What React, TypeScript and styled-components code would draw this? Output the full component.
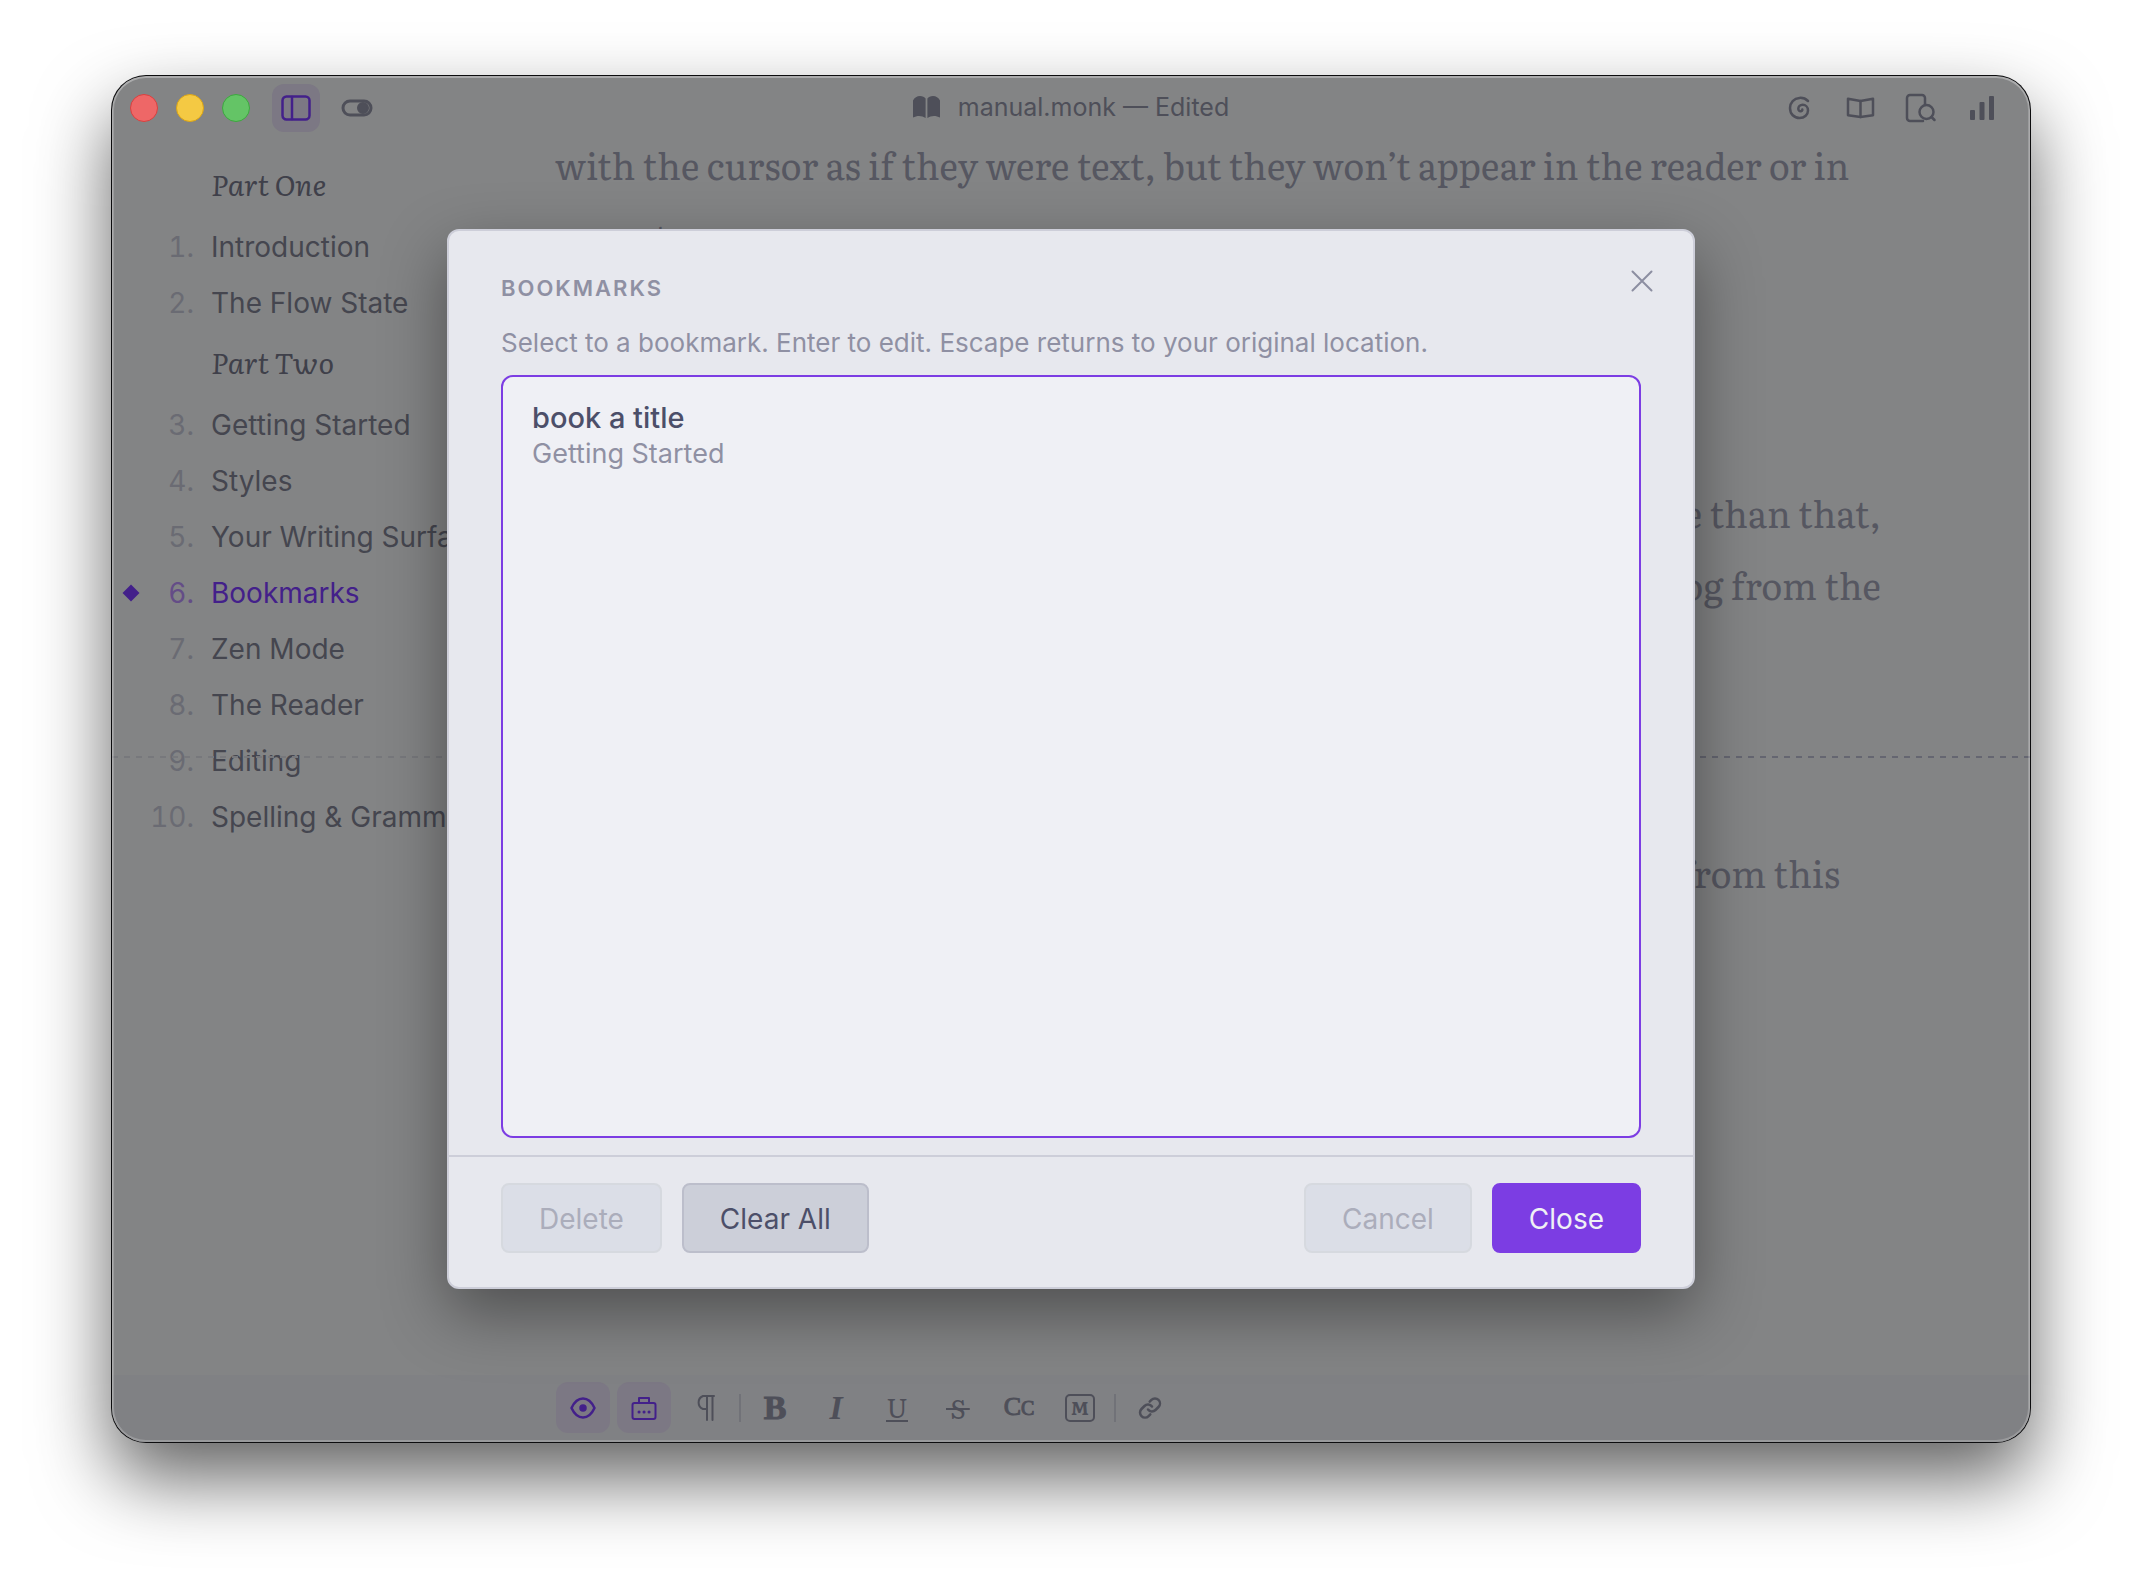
import React from 'react';
import styled, { createGlobalStyle, css } from 'styled-components';

const sans = `Inter, "Liberation Sans", sans-serif`;
const serif = `Literata, "Liberation Serif", serif`;

const GlobalStyle = createGlobalStyle`
  *, *::before, *::after { box-sizing: border-box; }
  body { margin: 0; background: #fff; font-family: ${sans}; }
  button { font: inherit; cursor: pointer; }
`;

const Desktop = styled.div`
  display: grid;
  grid-template-columns: minmax(0, 1fr);
  min-height: 100vh;
  padding: 76px 112px 148px;
  overflow: hidden;
`;

const Window = styled.div`
  position: relative;
  display: grid;
  grid-template-columns: minmax(0, 1fr);
  grid-template-rows: 64px 1fr 67px;
  overflow: hidden;
  border-radius: 34px;
  background: #838485;
  box-shadow: 0 0 0 1px #0c0c0e, 0 36px 76px rgba(0, 0, 0, 0.62);

  &::after {
    content: '';
    position: absolute;
    inset: 0;
    border-radius: inherit;
    box-shadow: inset 0 0 0 2px rgba(255, 255, 255, 0.2), inset 0 1px 0 1px rgba(255, 255, 255, 0.16);
    pointer-events: none;
  }
`;

const TitleBar = styled.header`
  display: grid;
  grid-template-columns: 1fr auto 1fr;
  align-items: center;
  padding: 0 18px;
  color: #4e4f59;
`;

const BarGroup = styled.div<{ $end?: boolean }>`
  display: flex;
  align-items: center;
  gap: 13px;
  justify-content: ${(p) => (p.$end ? 'flex-end' : 'flex-start')};
  padding-right: ${(p) => (p.$end ? 6 : 0)}px;
`;

const Lights = styled.div`
  display: flex;
  gap: 18px;
  margin-right: 9px;
`;

const Light = styled.button<{ $fill: string; $edge: string }>`
  width: 28px;
  height: 28px;
  padding: 0;
  border: 1px solid ${(p) => p.$edge};
  border-radius: 50%;
  background: ${(p) => p.$fill};
`;

const activeTool = css`
  background: #7c7884;
  color: #43208a;
`;

const BarButton = styled.button<{ $active?: boolean }>`
  display: grid;
  place-items: center;
  width: 48px;
  height: 48px;
  padding: 0;
  border: 0;
  border-radius: 12px;
  background: transparent;
  color: #4e4f59;
  ${(p) => p.$active && activeTool}
`;

const DocTitle = styled.h1`
  display: flex;
  align-items: center;
  gap: 18px;
  margin: 0;
  padding-bottom: 2px;
  color: #4e4f59;
  font: 400 25px/32px ${sans};
  white-space: nowrap;
`;

const Body = styled.div`
  position: relative;
  display: grid;
  grid-template-columns: 388px minmax(0, 1fr);
  min-height: 0;
`;

const Sidebar = styled.nav`
  padding-top: 13px;
  white-space: nowrap;
`;

const PartTitle = styled.h2`
  margin: 0;
  padding: 0 0 4px 99px;
  color: #3f404a;
  font: italic 400 29px/62px ${serif};
`;

const Chapters = styled.ol`
  margin: 0;
  padding: 0;
  list-style: none;
`;

const ChapterLink = styled.a<{ $active?: boolean }>`
  display: grid;
  grid-template-columns: 18px 54px 1fr;
  align-items: center;
  height: 56px;
  padding-left: 10px;
  color: ${(p) => (p.$active ? '#43208a' : '#45464f')};
  font-size: 28px;
  line-height: 56px;
  text-decoration: none;
`;

const Diamond = styled.svg`
  width: 18px;
  height: 18px;
  fill: currentColor;
`;

const Num = styled.span<{ $active?: boolean }>`
  justify-self: end;
  color: ${(p) => (p.$active ? '#644d87' : '#6a6b73')};
  font-variant-numeric: tabular-nums;
`;

const Label = styled.span`
  padding-left: 17px;
`;

const Editor = styled.main`
  margin-top: -11px;
  padding: 0 149px 0 55px;
  color: #565761;
  font: 400 36px/72px ${serif};
  white-space: nowrap;
`;

const Passage = styled.p<{ $gap?: number; $inset?: number }>`
  margin: ${(p) => p.$gap ?? 0}px 0 0;
  padding-right: ${(p) => p.$inset ?? 0}px;
`;

const TailPassage = styled(Passage)`
  text-align: right;
`;

const FocusLine = styled.div`
  position: absolute;
  inset: 616px 0 auto;
  display: grid;
  grid-template-columns: 388px 1fr;
  height: 2px;
  pointer-events: none;
`;

const Dashes = styled.span<{ $color: string }>`
  background: repeating-linear-gradient(90deg, ${(p) => p.$color} 0 6px, transparent 6px 12px);
`;

const FormatBar = styled.footer`
  display: flex;
  align-items: center;
  gap: 7px;
  padding: 0 0 2px 444px;
  background: #808184;
`;

const FormatButton = styled.button<{ $active?: boolean }>`
  display: grid;
  place-items: center;
  width: 54px;
  height: 51px;
  padding: 0;
  border: 0;
  border-radius: 12px;
  background: transparent;
  color: #4e4f59;
  ${(p) => p.$active && activeTool}
`;

const glyphKinds = {
  bold: css`
    font-family: "Liberation Serif", serif;
    font-weight: 700;
    font-size: 34px;
    -webkit-text-stroke: 1px;
  `,
  italic: css`
    font-family: "Liberation Serif", serif;
    font-weight: 700;
    font-style: italic;
    font-size: 34px;
  `,
  underline: css`
    font-size: 26px;
    line-height: 26px;
    border-bottom: 2px solid;
  `,
  strike: css`
    padding: 0 4px;
    font-size: 26px;
    background: linear-gradient(currentColor, currentColor) center 16px / 100% 2px no-repeat;
  `,
};

const Glyph = styled.span<{ $kind: keyof typeof glyphKinds }>`
  font: 400 30px/32px ${serif};
  ${(p) => glyphKinds[p.$kind]}
`;

const CapsGlyph = styled.span`
  font: 400 26px/32px "Liberation Serif", serif;
  -webkit-text-stroke: 1px;
  small { font-size: 20px; }
`;

const BoxGlyph = styled.span`
  display: grid;
  place-items: center;
  width: 30px;
  height: 28px;
  border: 2px solid;
  border-radius: 5px;
  font: 700 18px/24px ${serif};
`;

const Separator = styled.span`
  width: 2px;
  height: 28px;
  background: #717278;
`;

const Backdrop = styled.div`
  position: absolute;
  inset: 0;
  display: grid;
  place-items: center;
`;

const Dialog = styled.section`
  display: flex;
  flex-direction: column;
  width: 1248px;
  max-width: 90%;
  border: 2px solid #cdced9;
  border-radius: 12px;
  background: #e7e8ee;
  box-shadow: 0 24px 64px rgba(0, 0, 0, 0.4);
`;

const DialogHead = styled.div`
  display: flex;
  align-items: center;
  justify-content: space-between;
  padding: 26px 27px 0 52px;
`;

const DialogTitle = styled.h2`
  margin: 0;
  padding-top: 14px;
  color: #8f90a3;
  font: 600 22px/28px ${sans};
  letter-spacing: 2px;
  text-transform: uppercase;
`;

const CloseIcon = styled.button`
  display: grid;
  place-items: center;
  width: 48px;
  height: 48px;
  padding: 0;
  border: 0;
  background: transparent;
  color: #8c8ea1;
`;

const Hint = styled.p`
  margin: 0;
  padding: 20px 52px 15px;
  color: #8f90a3;
  font-size: 26px;
  line-height: 35px;
`;

const List = styled.ul`
  height: 763px;
  margin: 0 52px 17px;
  padding: 23px 29px;
  border: 2px solid #7c3de3;
  border-radius: 12px;
  background: #eff0f5;
  list-style: none;
`;

const Bookmark = styled.button`
  display: grid;
  padding: 0;
  border: 0;
  background: transparent;
  text-align: left;
`;

const BookmarkName = styled.span`
  color: #4c4f69;
  font-size: 29px;
  font-weight: 500;
  line-height: 36px;
`;

const BookmarkPlace = styled.span`
  color: #8f90a3;
  font-size: 27px;
  line-height: 36px;
`;

const Actions = styled.div`
  display: flex;
  gap: 20px;
  padding: 26px 52px 34px;
  border-top: 2px solid #cdced9;
`;

const ActionButton = styled.button<{ $primary?: boolean }>`
  height: 70px;
  padding: 2px ${(p) => (p.$primary ? 35 : 36)}px 0;
  border: 2px solid ${(p) => (p.$primary ? '#7c3de3' : '#bcbecb')};
  border-radius: 8px;
  background: ${(p) => (p.$primary ? '#7c3de3' : '#cccfd9')};
  color: ${(p) => (p.$primary ? '#eff1f5' : '#4c4f69')};
  font-size: 28px;

  &:disabled {
    border-color: #d6d9df;
    background: #dbdee7;
    color: #abadbb;
  }
`;

const Spacer = styled.span`
  flex: 1;
`;

type IconProps = { w: number; h: number; sw?: number; children: React.ReactNode };
const Icon = ({ w, h, sw = 3, children }: IconProps) => (
  <svg
    width={w}
    height={h}
    viewBox={`0 0 ${w} ${h}`}
    fill="none"
    stroke="currentColor"
    strokeWidth={sw}
    strokeLinecap="round"
    strokeLinejoin="round"
    aria-hidden="true"
  >
    {children}
  </svg>
);

const partOne = ['Introduction', 'The Flow State'];
const partTwo = [
  'Getting Started',
  'Styles',
  'Your Writing Surface',
  'Bookmarks',
  'Zen Mode',
  'The Reader',
  'Editing',
  'Spelling & Grammar',
];

const ChapterList = ({ names, start, current }: { names: string[]; start: number; current?: string }) => (
  <Chapters start={start}>
    {names.map((name, i) => {
      const active = name === current;
      return (
        <li key={name}>
          <ChapterLink href="#" $active={active} aria-current={active ? 'page' : undefined}>
            {active ? (
              <Diamond viewBox="0 0 18 18" aria-hidden="true">
                <path d="M9 .5 17.5 9 9 17.5 .5 9z" />
              </Diamond>
            ) : (
              <span />
            )}
            <Num $active={active}>{start + i}.</Num>
            <Label>{name}</Label>
          </ChapterLink>
        </li>
      );
    })}
  </Chapters>
);

export default function App() {
  return (
    <>
      <GlobalStyle />
      <Desktop>
        <Window>
          <TitleBar>
            <BarGroup>
              <Lights>
                <Light aria-label="Close window" $fill="#ee6767" $edge="#d9403f" />
                <Light aria-label="Minimize window" $fill="#f4c943" $edge="#dba514" />
                <Light aria-label="Zoom window" $fill="#64c466" $edge="#3da73f" />
              </Lights>
              <BarButton $active aria-label="Toggle sidebar">
                <Icon w={30} h={26} sw={2.5}>
                  <rect x="1.500" y="1.500" width="27" height="23" rx="4" />
                  <path d="M11 2v22" />
                </Icon>
              </BarButton>
              <BarButton aria-label="Focus mode">
                <Icon w={32} h={18}>
                  <rect x="2" y="2" width="28" height="14" rx="7" />
                  <circle cx="22" cy="9" r="5" fill="currentColor" strokeWidth="2" />
                </Icon>
              </BarButton>
            </BarGroup>
            <DocTitle>
              <svg width="27" height="22" viewBox="0 0 27 22" fill="currentColor" aria-hidden="true">
                <path d="M0 4.500C1.500 1.500 4 0 7 0c2.500 0 4.500 1 5.600 2.500V22C9 19.300 4 19.300 0 21.500z" />
                <path d="M27 4.500C25.500 1.500 23 0 20 0c-2.500 0-4.500 1-5.600 2.500V22c3.600-2.700 8.600-2.700 12.600-.5z" />
              </svg>
              manual.monk — Edited
            </DocTitle>
            <BarGroup $end>
              <BarButton aria-label="Flow">
                <Icon w={22} h={24} sw={2.5}>
                  <path d="M20 5C17.500 2.500 14.500 1.700 11.500 1.900 6 2.300 2 6.500 2 12c0 6 4.200 10 9.600 10 5 0 8.400-3.500 8.400-7.500 0-3.500-2.500-5.700-5.300-5.700-2.700 0-4.400 1.900-4.400 3.900 0 1.700 1.200 2.700 2.400 2.600 1.100-.1 1.800-.9 1.600-1.800" />
                </Icon>
              </BarButton>
              <BarButton aria-label="Reader">
                <Icon w={29} h={22} sw={2.5}>
                  <path d="M14.500 4 2 1.800v16.400L14.500 20 27 18.200V1.800z" />
                  <path d="M14.500 4v16" />
                </Icon>
              </BarButton>
              <BarButton aria-label="Search document">
                <Icon w={32} h={30} sw={2.5}>
                  <path d="M18 28H5a3 3 0 0 1-3-3V5a3 3 0 0 1 3-3h12a3 3 0 0 1 3 3v6" />
                  <circle cx="21.500" cy="19" r="7" />
                  <path d="m26.500 24 3 3" />
                </Icon>
              </BarButton>
              <BarButton aria-label="Statistics">
                <svg width="24" height="24" viewBox="0 0 24 24" fill="currentColor" aria-hidden="true">
                  <rect y="14" width="5" height="10" rx="1" />
                  <rect x="9.500" y="6" width="5" height="18" rx="1" />
                  <rect x="19" width="5" height="24" rx="1" />
                </svg>
              </BarButton>
            </BarGroup>
          </TitleBar>

          <Body>
            <Sidebar aria-label="Chapters">
              <PartTitle>Part One</PartTitle>
              <ChapterList names={partOne} start={1} />
              <PartTitle>Part Two</PartTitle>
              <ChapterList names={partTwo} start={3} current="Bookmarks" />
            </Sidebar>
            <Editor>
              <Passage>
                with the cursor as if they were text, but they won’t appear in the reader or in
                <br />
                exports.
              </Passage>
              <TailPassage $gap={204}>
                more than that,
                <br />
                dialog from the
              </TailPassage>
              <TailPassage $gap={216} $inset={41}>
                from this
              </TailPassage>
            </Editor>
            <FocusLine>
              <Dashes $color="#77787c" />
              <Dashes $color="#656671" />
            </FocusLine>
          </Body>

          <FormatBar>
            <FormatButton $active aria-label="Preview">
              <Icon w={26} h={26} sw={2.5}>
                <path d="M1.500 13C4.500 6.500 9 3.500 13 3.500S21.500 6.500 24.500 13C21.500 19.500 17 22.500 13 22.500S4.500 19.500 1.500 13z" />
                <circle cx="13" cy="13" r="2.500" fill="currentColor" />
              </Icon>
            </FormatButton>
            <FormatButton $active aria-label="Typewriter mode">
              <Icon w={26} h={24} sw={2}>
                <rect x="1.500" y="7" width="23" height="16" rx="2" />
                <path d="M8 7V2h10v5" />
                <path d="M8 16h.1M13 16h.1M18 16h.1" strokeWidth="3" />
              </Icon>
            </FormatButton>
            <FormatButton aria-label="Show paragraph marks">
              <Icon w={22} h={28} sw={2}>
                <path d="M20 2H9a7 7 0 0 0 0 13h4M13 2v24M18.500 2v24" />
              </Icon>
            </FormatButton>
            <Separator />
            <FormatButton aria-label="Bold">
              <Glyph $kind="bold">B</Glyph>
            </FormatButton>
            <FormatButton aria-label="Italic">
              <Glyph $kind="italic">I</Glyph>
            </FormatButton>
            <FormatButton aria-label="Underline">
              <Glyph $kind="underline">U</Glyph>
            </FormatButton>
            <FormatButton aria-label="Strikethrough">
              <Glyph $kind="strike">S</Glyph>
            </FormatButton>
            <FormatButton aria-label="Small caps">
              <CapsGlyph>
                C<small>C</small>
              </CapsGlyph>
            </FormatButton>
            <FormatButton aria-label="Monospace">
              <BoxGlyph>M</BoxGlyph>
            </FormatButton>
            <Separator />
            <FormatButton aria-label="Link">
              <Icon w={24} h={24} sw={2.5}>
                <path d="M10 13.500a5 5 0 0 0 7.500.5l3-3a5 5 0 0 0-7.100-7.100L11.700 5.600" />
                <path d="M14 10.500a5 5 0 0 0-7.500-.5l-3 3a5 5 0 0 0 7.100 7.100l1.700-1.700" />
              </Icon>
            </FormatButton>
          </FormatBar>

          <Backdrop>
            <Dialog role="dialog" aria-labelledby="dialog-title">
              <DialogHead>
                <DialogTitle id="dialog-title">Bookmarks</DialogTitle>
                <CloseIcon aria-label="Close dialog">
                  <Icon w={22} h={22} sw={2}>
                    <path d="M1.500 1.500l19 19M20.500 1.500l-19 19" />
                  </Icon>
                </CloseIcon>
              </DialogHead>
              <Hint>Select to a bookmark. Enter to edit. Escape returns to your original location.</Hint>
              <List>
                <li>
                  <Bookmark>
                    <BookmarkName>book a title</BookmarkName>
                    <BookmarkPlace>Getting Started</BookmarkPlace>
                  </Bookmark>
                </li>
              </List>
              <Actions>
                <ActionButton disabled>Delete</ActionButton>
                <ActionButton>Clear All</ActionButton>
                <Spacer />
                <ActionButton disabled>Cancel</ActionButton>
                <ActionButton $primary>Close</ActionButton>
              </Actions>
            </Dialog>
          </Backdrop>
        </Window>
      </Desktop>
    </>
  );
}
